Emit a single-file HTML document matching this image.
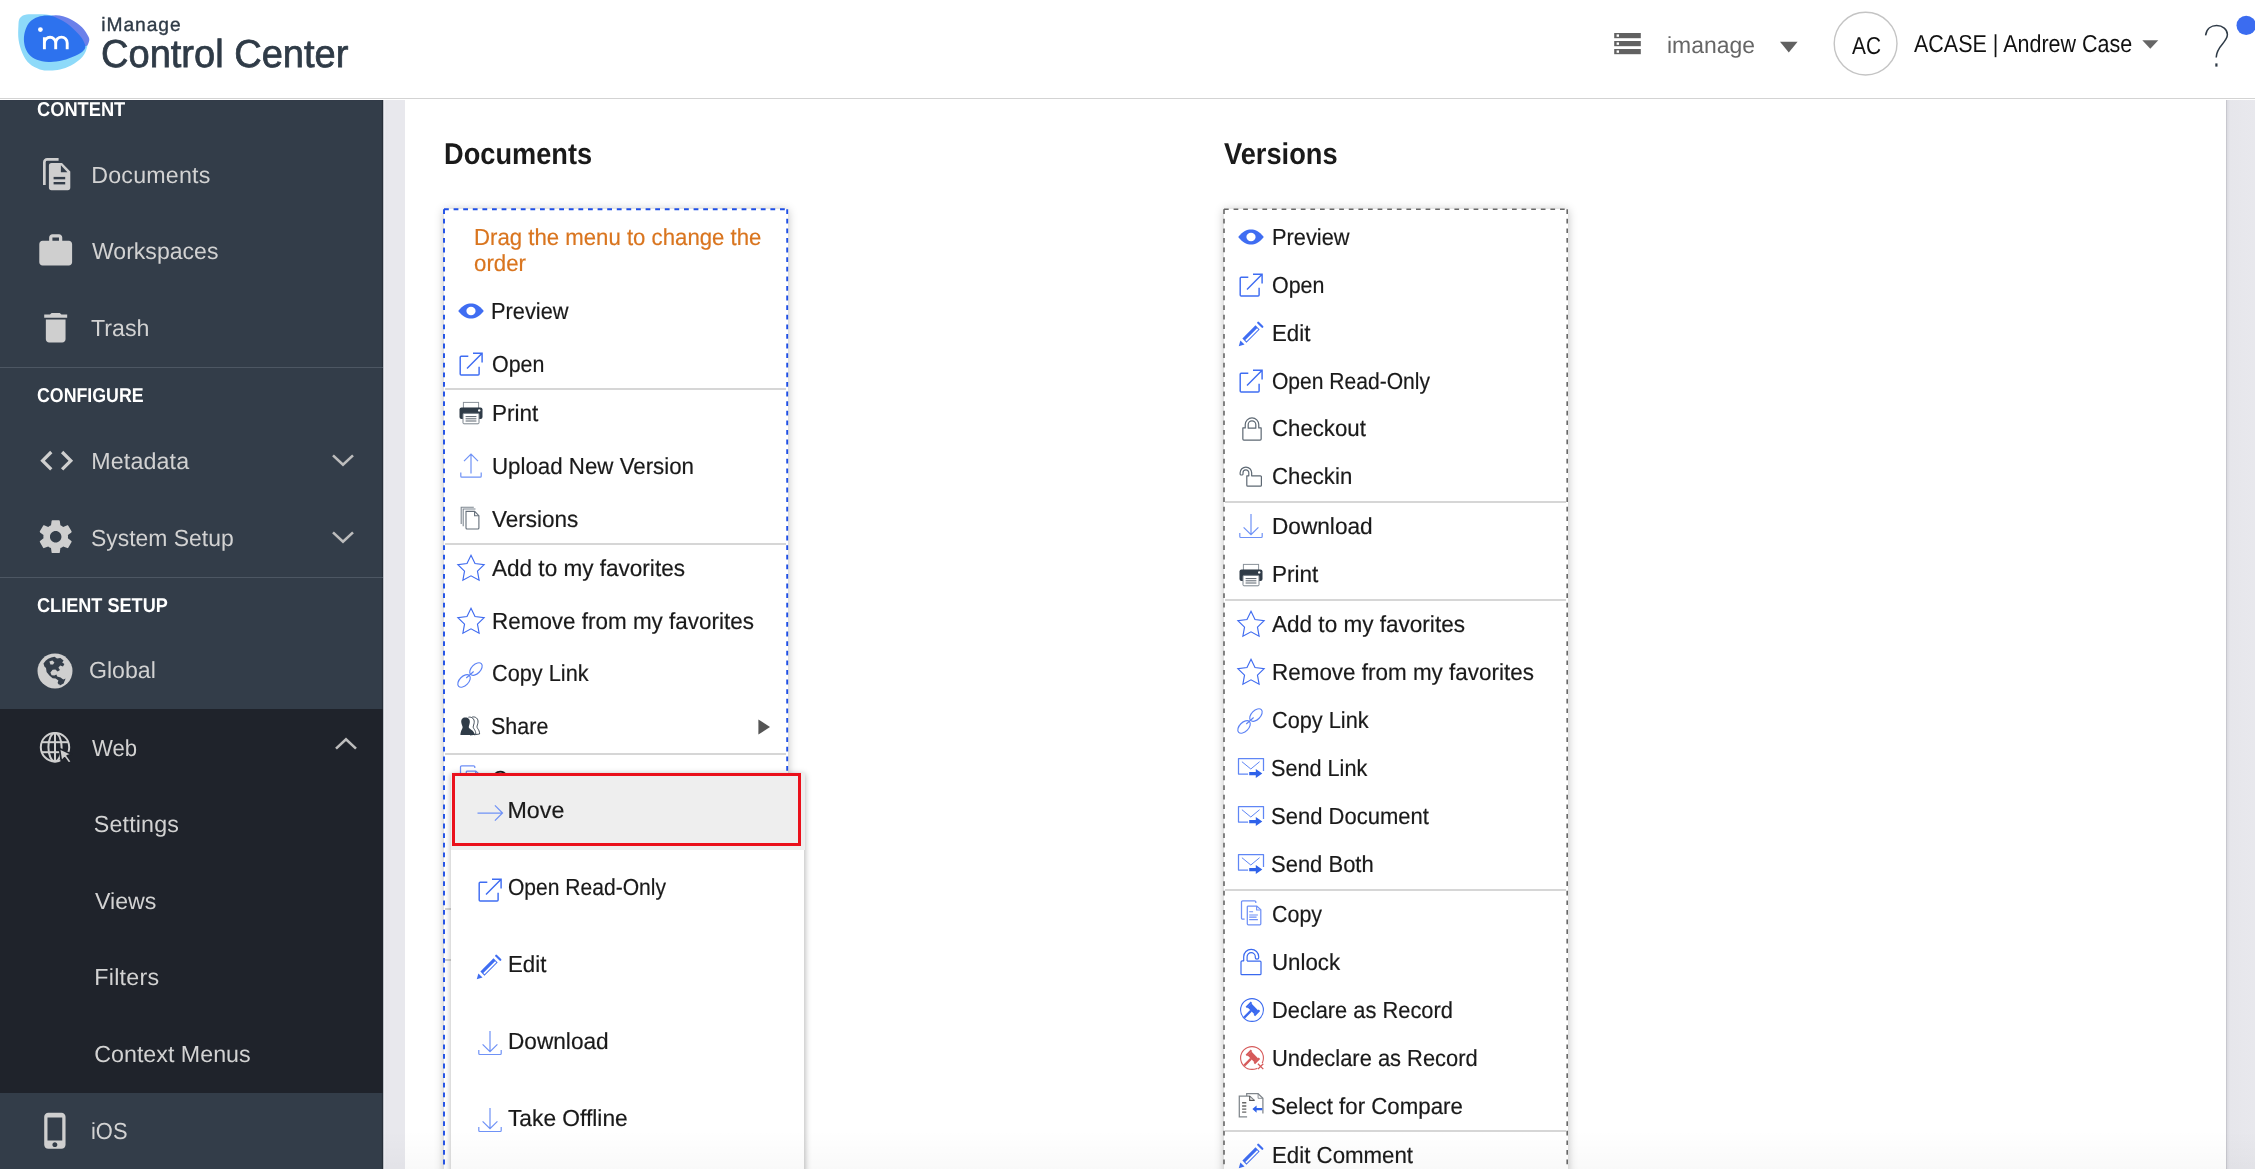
<!DOCTYPE html>
<html lang="en"><head><meta charset="utf-8"><title>iManage Control Center - Context Menus</title>
<style>
html,body{margin:0;padding:0}
body{width:2255px;height:1169px;overflow:hidden;position:relative;background:#fff;font-family:"Liberation Sans",sans-serif}
#root{position:absolute;left:0;top:0;width:2255px;height:1169px;overflow:hidden;will-change:transform}
.t{position:absolute;white-space:nowrap;display:block;transform-origin:0 0;text-rendering:geometricPrecision}
.abs{position:absolute}
svg{position:absolute;overflow:visible}
#header{position:absolute;left:0;top:0;width:2255px;height:98px;background:#fff;border-bottom:1.6px solid #d3d3d3;box-sizing:content-box}
#sidebar{position:absolute;left:0;top:99.5px;width:382.5px;box-shadow:inset -1.5px 0 1px -0.5px #262e38;height:1070px;background:#333d49;overflow:hidden}
#gap{position:absolute;left:382.5px;top:99.5px;width:22.5px;height:1070px;background:linear-gradient(90deg,#9a9fa8 0,#eeeef2 1.2px,#e6e6eb 3px,#e8e8ed 6px,#e8e8ed 100%)}
#rstrip{position:absolute;left:2226px;top:99.5px;width:29px;height:1070px;background:linear-gradient(90deg,#bdbdc4 0,#dcdce2 1.5px,#e6e6eb 4px,#e8e8ed 100%)}
#content{position:absolute;left:405px;top:99.5px;width:1821px;height:1070px;background:#fff}
.sbdiv{position:absolute;left:0;width:383px;height:1px;background:#4d5763}
#websec{position:absolute;left:0;top:709px;width:383px;height:384px;background:#1f232b}
.menu{position:absolute;background:#fff;box-shadow:0 1px 9px rgba(0,0,0,.26)}
.mdiv{position:absolute;height:2px;background:#d6d6d6}
#bottomfade{position:absolute;left:383px;top:1130px;width:1872px;height:39px;background:linear-gradient(180deg,rgba(0,0,0,0) 0,rgba(0,0,0,.024) 100%);z-index:20;pointer-events:none}
</style></head><body>
<div id="root">
<div id="content"></div>
<div id="gap"></div>
<div id="rstrip"></div>
<div id="sidebar"></div>
<div class="sbdiv" style="top:367px"></div>
<div class="sbdiv" style="top:577px"></div>
<div id="websec"></div>
<!-- documents menu -->
<div class="menu" style="left:443.5px;top:208.5px;width:344px;height:980px"></div>
<div class="mdiv" style="left:445px;top:388.0px;width:341px"></div>
<div class="mdiv" style="left:445px;top:543.0px;width:341px"></div>
<div class="mdiv" style="left:445px;top:752.6px;width:341px"></div>
<div class="mdiv" style="left:445px;top:908.0px;width:341px"></div>
<div class="mdiv" style="left:445px;top:959.0px;width:341px"></div>
<svg class="abs" style="left:0;top:0" width="2255" height="1169" viewBox="0 0 2255 1169"><line x1="444.0" y1="209.2" x2="787.2" y2="209.2" stroke="#1f4fe6" stroke-width="1.9" stroke-dasharray="4.8 4.8"/><line x1="444.0" y1="209.2" x2="444.0" y2="1189.2" stroke="#1f4fe6" stroke-width="1.9" stroke-dasharray="4.8 4.8"/><line x1="787.2" y1="209.2" x2="787.2" y2="1189.2" stroke="#1f4fe6" stroke-width="1.9" stroke-dasharray="4.8 4.8"/></svg>
<!-- versions menu -->
<div class="menu" style="left:1223.5px;top:208.5px;width:344px;height:980px"></div>
<div class="mdiv" style="left:1225px;top:501.0px;width:341px"></div>
<div class="mdiv" style="left:1225px;top:599.0px;width:341px"></div>
<div class="mdiv" style="left:1225px;top:888.6px;width:341px"></div>
<div class="mdiv" style="left:1225px;top:1130.0px;width:341px"></div>
<svg class="abs" style="left:0;top:0" width="2255" height="1169" viewBox="0 0 2255 1169"><line x1="1224.0" y1="209.2" x2="1567.2" y2="209.2" stroke="#686868" stroke-width="1.6" stroke-dasharray="4.7 4.9"/><line x1="1224.0" y1="209.2" x2="1224.0" y2="1189.2" stroke="#686868" stroke-width="1.6" stroke-dasharray="4.7 4.9"/><line x1="1567.2" y1="209.2" x2="1567.2" y2="1189.2" stroke="#686868" stroke-width="1.6" stroke-dasharray="4.7 4.9"/></svg>
<span class="t" style="left:37.25px;top:100.00px;font-size:20px;line-height:20px;color:#ffffff;transform:scaleX(0.9126);font-weight:700">CONTENT</span>
<span class="t" style="left:37.25px;top:386.00px;font-size:20px;line-height:20px;color:#ffffff;transform:scaleX(0.8887);font-weight:700">CONFIGURE</span>
<span class="t" style="left:37.25px;top:596.00px;font-size:20px;line-height:20px;color:#ffffff;transform:scaleX(0.9056);font-weight:700">CLIENT SETUP</span>
<span class="t" style="left:91.25px;top:164.00px;font-size:23.25px;line-height:23.25px;color:#d2d2d2;letter-spacing:0.181px">Documents</span>
<span class="t" style="left:91.50px;top:240.00px;font-size:23.25px;line-height:23.25px;color:#d2d2d2;transform:scaleX(0.9916)">Workspaces</span>
<span class="t" style="left:91.25px;top:317.00px;font-size:23.25px;line-height:23.25px;color:#d2d2d2;transform:scaleX(0.9972)">Trash</span>
<span class="t" style="left:91.25px;top:450.00px;font-size:23.25px;line-height:23.25px;color:#d2d2d2;letter-spacing:0.135px">Metadata</span>
<span class="t" style="left:91.00px;top:527.00px;font-size:23.25px;line-height:23.25px;color:#d2d2d2;transform:scaleX(0.9860)">System Setup</span>
<span class="t" style="left:88.50px;top:659.00px;font-size:23.25px;line-height:23.25px;color:#d2d2d2;transform:scaleX(0.9941)">Global</span>
<span class="t" style="left:91.75px;top:737.00px;font-size:23.25px;line-height:23.25px;color:#d2d2d2;transform:scaleX(0.9525)">Web</span>
<span class="t" style="left:93.75px;top:813.00px;font-size:23.25px;line-height:23.25px;color:#d2d2d2;letter-spacing:0.169px">Settings</span>
<span class="t" style="left:94.50px;top:890.00px;font-size:23.25px;line-height:23.25px;color:#d2d2d2;transform:scaleX(0.9966)">Views</span>
<span class="t" style="left:94.25px;top:966.00px;font-size:23.25px;line-height:23.25px;color:#d2d2d2;letter-spacing:0.275px">Filters</span>
<span class="t" style="left:94.25px;top:1043.00px;font-size:23.25px;line-height:23.25px;color:#d2d2d2">Context Menus</span>
<span class="t" style="left:91.25px;top:1120.00px;font-size:23.25px;line-height:23.25px;color:#d2d2d2;transform:scaleX(0.9413)">iOS</span>
<span class="t" style="left:443.50px;top:140.00px;font-size:30px;line-height:30px;color:#1a1a1a;transform:scaleX(0.9065);font-weight:700">Documents</span>
<span class="t" style="left:1223.50px;top:140.00px;font-size:30px;line-height:30px;color:#1a1a1a;transform:scaleX(0.9082);font-weight:700">Versions</span>
<span class="t" style="left:473.75px;top:226.00px;font-size:23.25px;line-height:23.25px;color:#d9751f;transform:scaleX(0.9544);-webkit-text-stroke:0.2px #d9751f">Drag the menu to change the</span>
<span class="t" style="left:474.25px;top:252.00px;font-size:23.25px;line-height:23.25px;color:#d9751f;transform:scaleX(0.9575);-webkit-text-stroke:0.2px #d9751f">order</span>
<span class="t" style="left:491.25px;top:300.00px;font-size:23.25px;line-height:23.25px;color:#1a1a1a;transform:scaleX(0.9374);-webkit-text-stroke:0.2px #1a1a1a">Preview</span>
<span class="t" style="left:492.00px;top:353.00px;font-size:23.25px;line-height:23.25px;color:#1a1a1a;transform:scaleX(0.9210);-webkit-text-stroke:0.2px #1a1a1a">Open</span>
<span class="t" style="left:491.50px;top:402.00px;font-size:23.25px;line-height:23.25px;color:#1a1a1a;transform:scaleX(0.9698);-webkit-text-stroke:0.2px #1a1a1a">Print</span>
<span class="t" style="left:491.75px;top:455.00px;font-size:23.25px;line-height:23.25px;color:#1a1a1a;transform:scaleX(0.9589);-webkit-text-stroke:0.2px #1a1a1a">Upload New Version</span>
<span class="t" style="left:491.75px;top:508.00px;font-size:23.25px;line-height:23.25px;color:#1a1a1a;transform:scaleX(0.9684);-webkit-text-stroke:0.2px #1a1a1a">Versions</span>
<span class="t" style="left:491.75px;top:557.00px;font-size:23.25px;line-height:23.25px;color:#1a1a1a;transform:scaleX(0.9696);-webkit-text-stroke:0.2px #1a1a1a">Add to my favorites</span>
<span class="t" style="left:491.75px;top:610.00px;font-size:23.25px;line-height:23.25px;color:#1a1a1a;transform:scaleX(0.9652);-webkit-text-stroke:0.2px #1a1a1a">Remove from my favorites</span>
<span class="t" style="left:491.75px;top:662.00px;font-size:23.25px;line-height:23.25px;color:#1a1a1a;transform:scaleX(0.9341);-webkit-text-stroke:0.2px #1a1a1a">Copy Link</span>
<span class="t" style="left:491.25px;top:715.00px;font-size:23.25px;line-height:23.25px;color:#1a1a1a;transform:scaleX(0.9241);-webkit-text-stroke:0.2px #1a1a1a">Share</span>
<span class="t" style="left:491.75px;top:768.00px;font-size:23.25px;line-height:23.25px;color:#1a1a1a;transform:scaleX(0.9221);-webkit-text-stroke:0.2px #1a1a1a">Copy</span>
<span class="t" style="left:1271.75px;top:226.00px;font-size:23.25px;line-height:23.25px;color:#1a1a1a;transform:scaleX(0.9374);-webkit-text-stroke:0.2px #1a1a1a">Preview</span>
<span class="t" style="left:1272.00px;top:274.00px;font-size:23.25px;line-height:23.25px;color:#1a1a1a;transform:scaleX(0.9210);-webkit-text-stroke:0.2px #1a1a1a">Open</span>
<span class="t" style="left:1271.75px;top:322.00px;font-size:23.25px;line-height:23.25px;color:#1a1a1a;transform:scaleX(0.9584);-webkit-text-stroke:0.2px #1a1a1a">Edit</span>
<span class="t" style="left:1272.00px;top:370.00px;font-size:23.25px;line-height:23.25px;color:#1a1a1a;transform:scaleX(0.9052);-webkit-text-stroke:0.2px #1a1a1a">Open Read-Only</span>
<span class="t" style="left:1271.75px;top:417.00px;font-size:23.25px;line-height:23.25px;color:#1a1a1a;transform:scaleX(0.9556);-webkit-text-stroke:0.2px #1a1a1a">Checkout</span>
<span class="t" style="left:1271.75px;top:465.00px;font-size:23.25px;line-height:23.25px;color:#1a1a1a;transform:scaleX(0.9555);-webkit-text-stroke:0.2px #1a1a1a">Checkin</span>
<span class="t" style="left:1271.50px;top:515.00px;font-size:23.25px;line-height:23.25px;color:#1a1a1a;transform:scaleX(0.9735);-webkit-text-stroke:0.2px #1a1a1a">Download</span>
<span class="t" style="left:1271.50px;top:563.00px;font-size:23.25px;line-height:23.25px;color:#1a1a1a;transform:scaleX(0.9698);-webkit-text-stroke:0.2px #1a1a1a">Print</span>
<span class="t" style="left:1271.75px;top:613.00px;font-size:23.25px;line-height:23.25px;color:#1a1a1a;transform:scaleX(0.9696);-webkit-text-stroke:0.2px #1a1a1a">Add to my favorites</span>
<span class="t" style="left:1271.75px;top:661.00px;font-size:23.25px;line-height:23.25px;color:#1a1a1a;transform:scaleX(0.9652);-webkit-text-stroke:0.2px #1a1a1a">Remove from my favorites</span>
<span class="t" style="left:1271.75px;top:709.00px;font-size:23.25px;line-height:23.25px;color:#1a1a1a;transform:scaleX(0.9341);-webkit-text-stroke:0.2px #1a1a1a">Copy Link</span>
<span class="t" style="left:1271.25px;top:757.00px;font-size:23.25px;line-height:23.25px;color:#1a1a1a;transform:scaleX(0.9306);-webkit-text-stroke:0.2px #1a1a1a">Send Link</span>
<span class="t" style="left:1271.25px;top:805.00px;font-size:23.25px;line-height:23.25px;color:#1a1a1a;transform:scaleX(0.9469);-webkit-text-stroke:0.2px #1a1a1a">Send Document</span>
<span class="t" style="left:1271.25px;top:853.00px;font-size:23.25px;line-height:23.25px;color:#1a1a1a;transform:scaleX(0.9457);-webkit-text-stroke:0.2px #1a1a1a">Send Both</span>
<span class="t" style="left:1271.75px;top:903.00px;font-size:23.25px;line-height:23.25px;color:#1a1a1a;transform:scaleX(0.9221);-webkit-text-stroke:0.2px #1a1a1a">Copy</span>
<span class="t" style="left:1271.75px;top:951.00px;font-size:23.25px;line-height:23.25px;color:#1a1a1a;transform:scaleX(0.9593);-webkit-text-stroke:0.2px #1a1a1a">Unlock</span>
<span class="t" style="left:1271.75px;top:999.00px;font-size:23.25px;line-height:23.25px;color:#1a1a1a;transform:scaleX(0.9394);-webkit-text-stroke:0.2px #1a1a1a">Declare as Record</span>
<span class="t" style="left:1271.75px;top:1047.00px;font-size:23.25px;line-height:23.25px;color:#1a1a1a;transform:scaleX(0.9418);-webkit-text-stroke:0.2px #1a1a1a">Undeclare as Record</span>
<span class="t" style="left:1271.25px;top:1095.00px;font-size:23.25px;line-height:23.25px;color:#1a1a1a;transform:scaleX(0.9580);-webkit-text-stroke:0.2px #1a1a1a">Select for Compare</span>
<span class="t" style="left:1271.75px;top:1144.00px;font-size:23.25px;line-height:23.25px;color:#1a1a1a;transform:scaleX(0.9576);-webkit-text-stroke:0.2px #1a1a1a">Edit Comment</span>
<svg style="left:0;top:0" width="383" height="1169" viewBox="0 0 383 1169">
<path d="M44.35 184.9 V162.2 a2.8 2.8 0 0 1 2.8 -2.8 H58.6" fill="none" stroke="#cfcfcf" stroke-width="2.7"/>
<path d="M51.5 163.1 H62.0 L70.3 171.4 V187.6 a2.6 2.6 0 0 1 -2.6 2.6 H51.5 a2.6 2.6 0 0 1 -2.6 -2.6 V165.7 a2.6 2.6 0 0 1 2.6 -2.6 Z" fill="#cfcfcf"/>
<path d="M60.9 165.3 V172.2 H67.4 Z" fill="#333d49"/>
<rect x="53.6" y="176.9" width="11.6" height="2.4" fill="#333d49"/>
<rect x="53.6" y="182.0" width="11.6" height="2.4" fill="#333d49"/>
</svg>
<svg style="left:36.30px;top:230.90px" width="39.4" height="39.4" viewBox="0 0 24 24"><path fill="#cfcfcf" d="M20 6h-4V4c0-1.11-.89-2-2-2h-4c-1.11 0-2 .89-2 2v2H4c-1.11 0-1.99.89-1.99 2L2 19c0 1.11.89 2 2 2h16c1.11 0 2-.89 2-2V8c0-1.11-.89-2-2-2zm-6 0h-4V4h4v2z"/></svg>
<svg style="left:36.30px;top:307.60px" width="39.4" height="39.4" viewBox="0 0 24 24"><path fill="#cfcfcf" d="M6 19c0 1.1.9 2 2 2h8c1.1 0 2-.9 2-2V7H6v12zM19 4h-3.5l-1-1h-5l-1 1H5v2h14V4z"/></svg>
<svg style="left:36.50px;top:440.50px" width="39.4" height="39.4" viewBox="0 0 24 24"><path fill="#cfcfcf" d="M9.4 16.6L4.8 12l4.6-4.6L8 6l-6 6 6 6 1.4-1.4zm5.2 0l4.6-4.6-4.6-4.6L16 6l6 6-6 6-1.4-1.4z"/></svg>
<svg style="left:36.30px;top:517.30px" width="39.4" height="39.4" viewBox="0 0 24 24"><path fill="#cfcfcf" d="M19.43 12.98c.04-.32.07-.64.07-.98s-.03-.66-.07-.98l2.11-1.65c.19-.15.24-.42.12-.64l-2-3.46c-.12-.22-.39-.3-.61-.22l-2.49 1c-.52-.4-1.08-.73-1.69-.98l-.38-2.65C14.46 2.18 14.25 2 14 2h-4c-.25 0-.46.18-.49.42l-.38 2.65c-.61.25-1.17.59-1.69.98l-2.49-1c-.23-.09-.49 0-.61.22l-2 3.46c-.13.22-.07.49.12.64l2.11 1.65c-.04.32-.07.65-.07.98s.03.66.07.98l-2.11 1.65c-.19.15-.24.42-.12.64l2 3.46c.12.22.39.3.61.22l2.49-1c.52.4 1.08.73 1.69.98l.38 2.65c.03.24.24.42.49.42h4c.25 0 .46-.18.49-.42l.38-2.65c.61-.25 1.17-.59 1.69-.98l2.49 1c.23.09.49 0 .61-.22l2-3.46c.12-.22.07-.49-.12-.64l-2.11-1.65zM12 15.5c-1.93 0-3.5-1.57-3.5-3.5s1.57-3.5 3.5-3.5 3.5 1.57 3.5 3.5-1.57 3.5-3.5 3.5z"/></svg>
<svg style="left:35.50px;top:1111.10px" width="39.4" height="39.4" viewBox="0 0 24 24"><path fill="#cfcfcf" d="M15.5 1h-8C6.12 1 5 2.12 5 3.5v17C5 21.88 6.12 23 7.5 23h8c1.38 0 2.5-1.12 2.5-2.5v-17C18 2.12 16.88 1 15.5 1zm-4 21c-.83 0-1.5-.67-1.5-1.5s.67-1.5 1.5-1.5 1.5.67 1.5 1.5-.67 1.5-1.5 1.5zm4.500-4H7V4h9v14z"/></svg>
<svg style="left:327.20px;top:444.20px" width="32" height="32" viewBox="-16.0 -16.0 32 32"><path d="M-10 -4.6 L0 4.8 L10 -4.6" fill="none" stroke="#bdbdbd" stroke-width="2.6"/></svg>
<svg style="left:327.20px;top:521.00px" width="32" height="32" viewBox="-16.0 -16.0 32 32"><path d="M-10 -4.6 L0 4.8 L10 -4.6" fill="none" stroke="#bdbdbd" stroke-width="2.6"/></svg>
<svg style="left:330.30px;top:727.60px" width="32" height="32" viewBox="-16.0 -16.0 32 32"><path d="M-10 4.6 L0 -4.8 L10 4.6" fill="none" stroke="#bdbdbd" stroke-width="2.6"/></svg>
<svg style="left:36.5px;top:653.2px" width="36" height="36" viewBox="-18 -18 36 36">
<circle cx="0" cy="0" r="17.5" fill="#cfcfcf"/>
<path fill="#333d49" d="M-11.5 -7.5 C-9 -11.5 -5 -13.8 -0.5 -14.2 L2 -12.6 L5.4 -13 L8.6 -10.6 L7.2 -8.6 L9.4 -7 L8 -4.6 L5.2 -5.4 L3.4 -3.2 L5 -1 L2.6 0.6 L0.4 -1.4 L-2.4 -1.2 L-4.6 1.4 L-3.4 4.2 L-0.6 4.6 L1.4 3.4 L2.2 5.6 L5.6 6.4 L8.8 9 L7.2 12 L4 13.8 L2.6 12 L3.4 9.4 L0.6 7.6 L-2.4 7.2 L-5.6 4.6 L-8.4 1 L-9 -3 L-10.6 -4.6 Z"/>
<path fill="#cfcfcf" d="M-5.6 -9.4 L-2.6 -10.6 L-0.6 -8.4 L-2 -6.4 L-4.6 -6.6 Z"/>
<path fill="#333d49" d="M4.4 10.6 L10.6 7.6 L8.6 12.4 L4.8 14.6 Z"/>
</svg>
<svg style="left:37px;top:729px" width="40" height="40" viewBox="-18 -18 40 40">
<g fill="none" stroke="#cfcfcf" stroke-width="2">
<circle cx="0" cy="0.2" r="14.2"/>
<ellipse cx="0" cy="0.2" rx="6.6" ry="14.2"/>
<line x1="0" y1="-14" x2="0" y2="14.4"/>
<line x1="-13.2" y1="-4.8" x2="13.2" y2="-4.8"/>
<line x1="-13.2" y1="5.2" x2="13.2" y2="5.2"/>
</g>
<path d="M4.4 1.4 L16.6 7.2 L12.2 8.8 L16.4 14.4 L13.8 16.4 L9.6 10.8 L6.4 14.4 Z" fill="#cfcfcf" stroke="#1f232b" stroke-width="1.7" stroke-linejoin="round"/>
</svg>
<svg style="left:454.60px;top:295.10px" width="32" height="32" viewBox="-16.0 -16.0 32 32"><path d="M-12.8 0 C-8 -6.2 -4 -7.5 0 -7.5 C4 -7.5 8 -6.2 12.8 0 C8 6.2 4 7.5 0 7.5 C-4 7.5 -8 6.2 -12.8 0Z" fill="#3f6df2"/><ellipse cx="0" cy="0" rx="4.6" ry="4.2" fill="#fff"/></svg>
<svg style="left:454.50px;top:347.50px" width="32" height="32" viewBox="-16.0 -16.0 32 32"><g fill="none" stroke="#3f6df2" stroke-width="1.45"><path d="M-2.7 -7.7 H-9.8 a1 1 0 0 0 -1 1 V10 a1 1 0 0 0 1 1 H7.1 a1 1 0 0 0 1 -1 V2.7"/><path d="M-4 4.4 L11.1 -10.7 M2.0 -10.7 H11.1 V-1.6"/></g></svg>
<svg style="left:454.50px;top:397.20px" width="32" height="32" viewBox="-16.0 -16.0 32 32"><rect x="-7.6" y="-10.6" width="15.2" height="6" fill="#fff" stroke="#8a929a" stroke-width="1"/>
<rect x="-11.5" y="-5.6" width="23" height="11.6" rx="2" fill="#2f3b47"/>
<circle cx="8.2" cy="-2.6" r="1.2" fill="#fff"/>
<rect x="-8" y="0.4" width="16" height="10.4" rx="1" fill="#fff" stroke="#7a838c" stroke-width="1"/>
<path d="M-5.4 3.6 H5.4 M-5.4 5.8 H5.4 M-5.4 8 H5.4" stroke="#59626c" stroke-width="1"/></svg>
<svg style="left:454.50px;top:449.80px" width="32" height="32" viewBox="-16.0 -16.0 32 32"><g fill="none" stroke="#6f92f6" stroke-width="1.2"><path d="M0 7.6 V-11.8 M-7 -4.9 L0 -12 L7 -4.9"/><path d="M-10.2 6.4 V10.2 a1 1 0 0 0 1 1 H9.2 a1 1 0 0 0 1 -1 V6.4"/></g></svg>
<svg style="left:454.20px;top:502.40px" width="32" height="32" viewBox="-16.0 -16.0 32 32"><g fill="none" stroke-width="1.1"><path d="M-8.8 5.9 V-10.8 H3.8" stroke="#7d8690"/><path d="M-6.8 8.3 V-9.0 H5.5" stroke="#7d8690"/><path d="M-4.0 -6.6 H4.6 L8.9 -2.3 V10 a1 1 0 0 1 -1 1 H-3.0 a1 1 0 0 1 -1 -1 Z" fill="#fff" stroke="#646e79"/><path d="M4.6 -6.6 V-2.3 H8.9" stroke="#646e79"/></g></svg>
<svg style="left:454.55px;top:553.20px" width="32" height="32" viewBox="-16.0 -16.0 32 32"><polygon points="0.00,-13.80 4.00,-5.50 13.12,-4.26 6.47,2.10 8.11,11.16 0.00,6.80 -8.11,11.16 -6.47,2.10 -13.12,-4.26 -4.00,-5.50" fill="none" stroke="#3f6bf0" stroke-width="1.15" stroke-linejoin="miter"/></svg>
<svg style="left:454.55px;top:605.90px" width="32" height="32" viewBox="-16.0 -16.0 32 32"><polygon points="0.00,-13.80 4.00,-5.50 13.12,-4.26 6.47,2.10 8.11,11.16 0.00,6.80 -8.11,11.16 -6.47,2.10 -13.12,-4.26 -4.00,-5.50" fill="none" stroke="#3f6bf0" stroke-width="1.15" stroke-linejoin="miter"/></svg>
<svg style="left:454.25px;top:658.65px" width="32" height="32" viewBox="-16.0 -16.0 32 32"><g fill="none" stroke="#5d83f5" stroke-width="1.15"><ellipse cx="0" cy="0" rx="7.6" ry="4.5" transform="translate(5.95,-5.95) rotate(-45)"/><ellipse cx="0" cy="0" rx="7.6" ry="4.5" transform="translate(-5.95,5.95) rotate(-45)"/><path d="M-3.75 3.05 L3.65 -3.45"/></g></svg>
<svg style="left:454.40px;top:710.00px" width="32" height="32" viewBox="-16.0 -16.0 32 32"><path d="M2.2 -9 C5.6 -9.6 8.4 -7.4 8 -3.8 C7.8 -1.6 7 -0.4 7 0.8 C7 2.6 9.6 3.6 9.6 8 L4 8.8" fill="#fff" stroke="#2f3b47" stroke-width="0.9"/>
<path d="M-1.6 -8.8 C1.8 -9.4 4.6 -7.2 4.2 -3.6 C4 -1.4 3.2 -0.2 3.2 1 C3.2 2.8 5.8 3.8 5.8 8.2 L0 9" fill="#fff" stroke="#2f3b47" stroke-width="0.9"/>
<path d="M-4.6 -8.4 C-1.6 -8.4 0.2 -6.4 -0.2 -3.4 C-0.5 -1.2 -1.2 0 -1.2 1.2 C-1.2 3 4.4 4 4.8 9 H-9.6 C-9.4 4.4 -7.4 3 -7.4 1.2 C-7.4 0 -8.4 -1.2 -8.7 -3.4 C-9.1 -6.4 -7.6 -8.4 -4.6 -8.4Z" fill="#2f3b47"/></svg>
<svg style="left:748.00px;top:710.50px" width="32" height="32" viewBox="-16.0 -16.0 32 32"><path d="M-5.6 -7.6 L6 0 L-5.6 7.6 Z" fill="#555"/></svg>
<svg style="left:454.20px;top:762.00px" width="32" height="32" viewBox="-16.0 -16.0 32 32"><g fill="none" stroke="#6f90f6" stroke-width="1.25" stroke-linejoin="round"><path d="M-6.4 6.2 H-8.3 a1.2 1.2 0 0 1 -1.2 -1.2 V-10.9 a1.2 1.2 0 0 1 1.2 -1.2 H3.6 a1.2 1.2 0 0 1 1.2 1.2 V-9.9"/>
<path d="M-2.7 -7 H5.6 L9.8 -3.4 V10.8 a1 1 0 0 1 -1 1 H-2.7 a1 1 0 0 1 -1 -1 V-6 a1 1 0 0 1 1 -1 Z"/><path d="M5.6 -7 V-3 H9.4" stroke-width="1.1"/>
<path d="M-1.8 -1.3 H2.1 M-1.8 2.0 H6.9 M-1.8 4.1 H5.6 M-1.8 6.6 H6.9" stroke-width="1.1"/></g></svg>
<svg style="left:1235.40px;top:221.40px" width="32" height="32" viewBox="-16.0 -16.0 32 32"><path d="M-12.8 0 C-8 -6.2 -4 -7.5 0 -7.5 C4 -7.5 8 -6.2 12.8 0 C8 6.2 4 7.5 0 7.5 C-4 7.5 -8 6.2 -12.8 0Z" fill="#3f6df2"/><ellipse cx="0" cy="0" rx="4.6" ry="4.2" fill="#fff"/></svg>
<svg style="left:1235.10px;top:269.00px" width="32" height="32" viewBox="-16.0 -16.0 32 32"><g fill="none" stroke="#3f6df2" stroke-width="1.45"><path d="M-2.7 -7.7 H-9.8 a1 1 0 0 0 -1 1 V10 a1 1 0 0 0 1 1 H7.1 a1 1 0 0 0 1 -1 V2.7"/><path d="M-4 4.4 L11.1 -10.7 M2.0 -10.7 H11.1 V-1.6"/></g></svg>
<svg style="left:1235.00px;top:317.80px" width="32" height="32" viewBox="-16.0 -16.0 32 32"><g transform="rotate(-45)">
<path d="M-17.3 0 L-12.1 -2.9 V2.9 Z" fill="#3f6df2"/>
<rect x="-9.3" y="-2.9" width="18.6" height="5.8" fill="#3f6df2"/>
<rect x="-8.3" y="0.3" width="16.6" height="1.7" fill="#fff"/>
<path d="M13.1 -2.9 V2.9" stroke="#3f6df2" stroke-width="2.2" stroke-linecap="round"/>
</g></svg>
<svg style="left:1235.10px;top:364.80px" width="32" height="32" viewBox="-16.0 -16.0 32 32"><g fill="none" stroke="#3f6df2" stroke-width="1.45"><path d="M-2.7 -7.7 H-9.8 a1 1 0 0 0 -1 1 V10 a1 1 0 0 0 1 1 H7.1 a1 1 0 0 0 1 -1 V2.7"/><path d="M-4 4.4 L11.1 -10.7 M2.0 -10.7 H11.1 V-1.6"/></g></svg>
<svg style="left:1236.05px;top:413.30px" width="32" height="32" viewBox="-16.0 -16.0 32 32"><g fill="none" stroke="#5d6873" stroke-width="1.2" stroke-linejoin="round"><path d="M-9.15 -1.1 H-6.75 V-4.4 a6.75 6.75 0 0 1 13.5 0 V-1.1 H9.15 V10.1 a1 1 0 0 1 -1 1 H-8.15 a1 1 0 0 1 -1 -1 Z"/><path d="M-3.8 -0.8 V-4.4 a3.8 3.8 0 0 1 7.6 0 V-0.8 Z"/></g></svg>
<svg style="left:1235.30px;top:461.40px" width="32" height="32" viewBox="-16.0 -16.0 32 32"><g fill="none" stroke="#5d6873" stroke-width="1.2" stroke-linejoin="round"><path d="M-8 -3.1 V-4.2 a2.9 2.9 0 0 1 5.8 0 V-1.2 H-4.2 V8.2 a1 1 0 0 0 1 1 H9.4 a1 1 0 0 0 1 -1 V-0.2 a1 1 0 0 0 -1 -1 H0.67 V-4.2 a5.77 5.77 0 0 0 -11.54 0 V-3.1 a1.43 1.1 0 0 0 2.87 0"/></g></svg>
<svg style="left:1235.00px;top:510.20px" width="32" height="32" viewBox="-16.0 -16.0 32 32"><g fill="none" stroke="#6f92f6" stroke-width="1.2"><path d="M0 -12.1 V8.5 M-7.4 1.3 L0 8.7 L7.4 1.3"/><path d="M-11.2 6.9 V10.5 a1 1 0 0 0 1 1 H10.2 a1 1 0 0 0 1 -1 V6.9"/></g></svg>
<svg style="left:1235.00px;top:558.60px" width="32" height="32" viewBox="-16.0 -16.0 32 32"><rect x="-7.6" y="-10.6" width="15.2" height="6" fill="#fff" stroke="#8a929a" stroke-width="1"/>
<rect x="-11.5" y="-5.6" width="23" height="11.6" rx="2" fill="#2f3b47"/>
<circle cx="8.2" cy="-2.6" r="1.2" fill="#fff"/>
<rect x="-8" y="0.4" width="16" height="10.4" rx="1" fill="#fff" stroke="#7a838c" stroke-width="1"/>
<path d="M-5.4 3.6 H5.4 M-5.4 5.8 H5.4 M-5.4 8 H5.4" stroke="#59626c" stroke-width="1"/></svg>
<svg style="left:1234.55px;top:608.80px" width="32" height="32" viewBox="-16.0 -16.0 32 32"><polygon points="0.00,-13.80 4.00,-5.50 13.12,-4.26 6.47,2.10 8.11,11.16 0.00,6.80 -8.11,11.16 -6.47,2.10 -13.12,-4.26 -4.00,-5.50" fill="none" stroke="#3f6bf0" stroke-width="1.15" stroke-linejoin="miter"/></svg>
<svg style="left:1234.55px;top:656.80px" width="32" height="32" viewBox="-16.0 -16.0 32 32"><polygon points="0.00,-13.80 4.00,-5.50 13.12,-4.26 6.47,2.10 8.11,11.16 0.00,6.80 -8.11,11.16 -6.47,2.10 -13.12,-4.26 -4.00,-5.50" fill="none" stroke="#3f6bf0" stroke-width="1.15" stroke-linejoin="miter"/></svg>
<svg style="left:1234.25px;top:704.85px" width="32" height="32" viewBox="-16.0 -16.0 32 32"><g fill="none" stroke="#5d83f5" stroke-width="1.15"><ellipse cx="0" cy="0" rx="7.6" ry="4.5" transform="translate(5.95,-5.95) rotate(-45)"/><ellipse cx="0" cy="0" rx="7.6" ry="4.5" transform="translate(-5.95,5.95) rotate(-45)"/><path d="M-3.75 3.05 L3.65 -3.45"/></g></svg>
<svg style="left:1235.00px;top:751.60px" width="32" height="32" viewBox="-16.0 -16.0 32 32"><g fill="none" stroke="#5f86f5" stroke-width="1.25" stroke-linejoin="round"><path d="M-2.9 6 H-12.5 V-9.4 H12.5 V2.9"/><path d="M-9.1 -6.3 L-0.2 1.0 L8.6 -6.3" stroke-width="1.0"/></g>
<path d="M-1.8 4.1 H4.8 V1.0 L11.3 5.6 L4.8 10.0 V7.3 H-1.8 Z" fill="#2f62ea"/></svg>
<svg style="left:1235.00px;top:799.60px" width="32" height="32" viewBox="-16.0 -16.0 32 32"><g fill="none" stroke="#5f86f5" stroke-width="1.25" stroke-linejoin="round"><path d="M-2.9 6 H-12.5 V-9.4 H12.5 V2.9"/><path d="M-9.1 -6.3 L-0.2 1.0 L8.6 -6.3" stroke-width="1.0"/></g>
<path d="M-1.8 4.1 H4.8 V1.0 L11.3 5.6 L4.8 10.0 V7.3 H-1.8 Z" fill="#2f62ea"/></svg>
<svg style="left:1235.00px;top:847.80px" width="32" height="32" viewBox="-16.0 -16.0 32 32"><g fill="none" stroke="#5f86f5" stroke-width="1.25" stroke-linejoin="round"><path d="M-2.9 6 H-12.5 V-9.4 H12.5 V2.9"/><path d="M-9.1 -6.3 L-0.2 1.0 L8.6 -6.3" stroke-width="1.0"/></g>
<path d="M-1.8 4.1 H4.8 V1.0 L11.3 5.6 L4.8 10.0 V7.3 H-1.8 Z" fill="#2f62ea"/></svg>
<svg style="left:1235.00px;top:897.40px" width="32" height="32" viewBox="-16.0 -16.0 32 32"><g fill="none" stroke="#6f90f6" stroke-width="1.25" stroke-linejoin="round"><path d="M-6.4 6.2 H-8.3 a1.2 1.2 0 0 1 -1.2 -1.2 V-10.9 a1.2 1.2 0 0 1 1.2 -1.2 H3.6 a1.2 1.2 0 0 1 1.2 1.2 V-9.9"/>
<path d="M-2.7 -7 H5.6 L9.8 -3.4 V10.8 a1 1 0 0 1 -1 1 H-2.7 a1 1 0 0 1 -1 -1 V-6 a1 1 0 0 1 1 -1 Z"/><path d="M5.6 -7 V-3 H9.4" stroke-width="1.1"/>
<path d="M-1.8 -1.3 H2.1 M-1.8 2.0 H6.9 M-1.8 4.1 H5.6 M-1.8 6.6 H6.9" stroke-width="1.1"/></g></svg>
<svg style="left:1234.80px;top:946.00px" width="32" height="32" viewBox="-16.0 -16.0 32 32"><g fill="none" stroke="#3a69ef" stroke-width="1.2" stroke-linejoin="round"><path d="M-3.9 -0.9 H9 a1 1 0 0 1 1 1 V11.7 a1 1 0 0 1 -1 1 H-9 a1 1 0 0 1 -1 -1 V0 a1.2 1.2 0 0 1 1.2 -1.2 H-7.3 V-5.2 a7.5 7.5 0 0 1 15 0 V-4.2 a1.7 1.3 0 0 1 -3.4 0 V-5.2 a4.1 4.1 0 0 0 -8.2 0 V-0.9"/></g></svg>
<svg style="left:1235.55px;top:993.90px" width="32" height="32" viewBox="-16.0 -16.0 32 32"><circle cx="0" cy="0" r="11.4" fill="none" stroke="#3a69ef" stroke-width="1.1"/>
<g transform="translate(0.9,-1.1) rotate(45)" fill="#3a69ef"><rect x="-4.8" y="-2.7" width="9.6" height="5.4"/><rect x="-6.7" y="-3.6" width="2.1" height="7.2"/><rect x="4.6" y="-3.6" width="2.1" height="7.2"/><rect x="-1.15" y="2.5" width="2.3" height="9.8"/></g></svg>
<svg style="left:1235.55px;top:1042.00px" width="32" height="32" viewBox="-16.0 -16.0 32 32"><circle cx="0" cy="0" r="11.4" fill="none" stroke="#d65a5a" stroke-width="1.1"/>
<g transform="translate(0.9,-1.1) rotate(45)" fill="#d65a5a"><rect x="-4.8" y="-2.7" width="9.6" height="5.4"/><rect x="-6.7" y="-3.6" width="2.1" height="7.2"/><rect x="4.6" y="-3.6" width="2.1" height="7.2"/><rect x="-1.15" y="2.5" width="2.3" height="9.8"/></g><circle cx="8.6" cy="8.4" r="3.6" fill="#fff"/><path d="M5.9 5.7 L11.3 11.1 M11.3 5.7 L5.9 11.1" stroke="#d65a5a" stroke-width="1.3"/></svg>
<svg style="left:1234.70px;top:1089.00px" width="32" height="32" viewBox="-16.0 -16.0 32 32"><g fill="none" stroke="#80868c" stroke-width="1.25"><path d="M-4.3 -8.9 V-11.3 H7.1 L11.9 -6.7 V8.5"/><path d="M7.1 -11.3 V-6.7 H11.9" stroke-width="0.9"/>
<path d="M-3.9 11.9 H-11.7 V-8.9 H-1.3 L3.7 -4.4"/><path d="M-1.3 -8.9 V-4.6 H3.4" stroke="#555" stroke-width="1.1"/></g>
<path d="M-8.9 -2.3 H-4.7 M-8.9 1.0 H-4.7 M-8.9 4.1 H-4.7 M-8.9 7.1 H-4.7" stroke="#666" stroke-width="1.4"/>
<path d="M1.4 4.1 L5.6 0.5 V3.0 H11.3 V5.2 H5.6 V7.7 Z" fill="#2f62ea"/></svg>
<svg style="left:1235.20px;top:1139.90px" width="32" height="32" viewBox="-16.0 -16.0 32 32"><g transform="rotate(-45)">
<path d="M-17.3 0 L-12.1 -2.9 V2.9 Z" fill="#3f6df2"/>
<rect x="-9.3" y="-2.9" width="18.6" height="5.8" fill="#3f6df2"/>
<rect x="-8.3" y="0.3" width="16.6" height="1.7" fill="#fff"/>
<path d="M13.1 -2.9 V2.9" stroke="#3f6df2" stroke-width="2.2" stroke-linecap="round"/>
</g></svg>
<!-- floating dragged list -->
<div class="abs" style="left:451px;top:773px;width:354px;height:420px;background:#fff;box-shadow:0 1px 6px rgba(0,0,0,.3);border-right:1px solid #d6d6d6;box-sizing:border-box"></div>
<div class="abs" style="left:451px;top:773px;width:354px;height:76.7px;background:#eeeeee"></div>
<div class="abs" style="left:452px;top:773px;width:349px;height:73px;border:3px solid #ea101b;box-sizing:border-box"></div>
<span class="t" style="left:507.50px;top:799.00px;font-size:23.25px;line-height:23.25px;color:#1a1a1a;-webkit-text-stroke:0.2px #1a1a1a">Move</span>
<span class="t" style="left:508.00px;top:876.00px;font-size:23.25px;line-height:23.25px;color:#1a1a1a;transform:scaleX(0.9052);-webkit-text-stroke:0.2px #1a1a1a">Open Read-Only</span>
<span class="t" style="left:507.75px;top:953.00px;font-size:23.25px;line-height:23.25px;color:#1a1a1a;transform:scaleX(0.9584);-webkit-text-stroke:0.2px #1a1a1a">Edit</span>
<span class="t" style="left:507.50px;top:1030.00px;font-size:23.25px;line-height:23.25px;color:#1a1a1a;transform:scaleX(0.9735);-webkit-text-stroke:0.2px #1a1a1a">Download</span>
<span class="t" style="left:507.75px;top:1107.00px;font-size:23.25px;line-height:23.25px;color:#1a1a1a;transform:scaleX(0.9784);-webkit-text-stroke:0.2px #1a1a1a">Take Offline</span>
<svg style="left:473.60px;top:797.30px" width="32" height="32" viewBox="-16.0 -16.0 32 32"><g fill="none" stroke="#6f92f6" stroke-width="1.25"><path d="M-12.5 0 H12.3 M4.9 -7.6 L12.5 0 L4.9 7.6"/></g></svg>
<svg style="left:473.70px;top:873.70px" width="32" height="32" viewBox="-16.0 -16.0 32 32"><g fill="none" stroke="#3f6df2" stroke-width="1.45"><path d="M-2.7 -7.7 H-9.8 a1 1 0 0 0 -1 1 V10 a1 1 0 0 0 1 1 H7.1 a1 1 0 0 0 1 -1 V2.7"/><path d="M-4 4.4 L11.1 -10.7 M2.0 -10.7 H11.1 V-1.6"/></g></svg>
<svg style="left:473.30px;top:950.90px" width="32" height="32" viewBox="-16.0 -16.0 32 32"><g transform="rotate(-45)">
<path d="M-17.3 0 L-12.1 -2.9 V2.9 Z" fill="#3f6df2"/>
<rect x="-9.3" y="-2.9" width="18.6" height="5.8" fill="#3f6df2"/>
<rect x="-8.3" y="0.3" width="16.6" height="1.7" fill="#fff"/>
<path d="M13.1 -2.9 V2.9" stroke="#3f6df2" stroke-width="2.2" stroke-linecap="round"/>
</g></svg>
<svg style="left:473.60px;top:1027.00px" width="32" height="32" viewBox="-16.0 -16.0 32 32"><g fill="none" stroke="#6f92f6" stroke-width="1.2"><path d="M0 -12.1 V8.5 M-7.4 1.3 L0 8.7 L7.4 1.3"/><path d="M-11.2 6.9 V10.5 a1 1 0 0 0 1 1 H10.2 a1 1 0 0 0 1 -1 V6.9"/></g></svg>
<svg style="left:473.60px;top:1104.00px" width="32" height="32" viewBox="-16.0 -16.0 32 32"><g fill="none" stroke="#6f92f6" stroke-width="1.2"><path d="M0 -12.1 V8.5 M-7.4 1.3 L0 8.7 L7.4 1.3"/><path d="M-11.2 6.9 V10.5 a1 1 0 0 0 1 1 H10.2 a1 1 0 0 0 1 -1 V6.9"/></g></svg>
<div id="header"></div>
<svg style="left:14px;top:8px" width="82" height="70" viewBox="14 8 82 70">
<path d="M18.4 26.0 C18.6 22.4 18.6 20.5 19.6 18.6 C20.6 16.8 22.1 15.6 24.5 14.9 C26.9 14.2 30.4 14.2 34.0 14.2 C37.6 14.1 41.7 14.1 46.0 14.6 C50.3 15.1 55.2 15.6 60.0 17.4 C64.8 19.2 70.6 22.3 75.0 25.5 C79.4 28.7 84.4 33.0 86.4 36.5 C88.4 40.0 87.9 43.1 87.2 46.5 C86.5 49.9 85.2 53.6 82.5 56.8 C79.8 60.0 74.8 63.5 71.0 65.6 C67.2 67.7 63.5 68.6 60.0 69.4 C56.5 70.2 53.4 70.5 50.0 70.5 C46.6 70.5 43.4 70.6 39.9 69.4 C36.4 68.2 32.2 66.3 29.3 63.6 C26.4 60.9 24.2 57.1 22.4 53.2 C20.6 49.3 19.3 44.5 18.6 40.0 C17.9 35.5 18.2 29.6 18.4 26.0Z" fill="#8edaf9"/>
<path d="M47.0 18.0 C46.5 15.9 51.3 15.7 54.0 15.4 C56.7 15.1 60.0 15.4 63.0 16.2 C66.0 17.0 68.8 18.2 72.0 20.0 C75.2 21.8 79.3 24.5 82.0 27.2 C84.7 29.9 87.2 34.0 88.4 36.4 C89.6 38.8 89.4 39.8 89.0 41.4 C88.6 43.0 87.7 45.6 86.2 46.0 C84.7 46.4 83.0 45.3 80.0 44.0 C77.0 42.7 71.8 40.7 68.0 38.0 C64.2 35.3 60.5 31.3 57.0 28.0 C53.5 24.7 47.5 20.1 47.0 18.0Z" fill="#6b80ea"/>
<path d="M23.9 39.9 C23.8 36.6 24.4 33.0 25.4 30.0 C26.4 27.0 27.9 24.0 30.0 21.8 C32.1 19.6 35.0 18.0 38.0 17.0 C41.0 16.0 44.7 15.4 48.0 15.6 C51.3 15.8 54.5 16.8 58.0 18.4 C61.5 20.0 65.4 22.1 69.0 25.0 C72.6 27.9 77.2 32.3 79.8 35.5 C82.4 38.7 84.0 41.7 84.8 44.0 C85.6 46.3 85.7 47.4 84.6 49.2 C83.5 51.0 81.1 52.9 78.0 54.6 C74.9 56.3 70.1 58.2 66.0 59.4 C61.9 60.6 57.2 61.4 53.2 61.7 C49.2 62.0 45.5 62.0 42.0 61.3 C38.5 60.6 35.1 59.5 32.5 57.6 C29.9 55.7 27.6 53.0 26.2 50.0 C24.8 47.0 24.0 43.2 23.9 39.9Z" fill="#2d72ee"/>
<circle cx="40.4" cy="29.6" r="2.4" fill="#fff"/>
<path d="M44.4 49.2 V37.2 M44.4 42.9 a5.65 5.65 0 0 1 11.3 0 V49.2 M55.7 42.9 a5.75 5.75 0 0 1 11.5 0 V49.2" fill="none" stroke="#fff" stroke-width="2.9"/>
</svg>
<svg style="left:1614px;top:32px" width="28" height="24" viewBox="1614 32 28 24">
<g fill="#616161"><rect x="1614.2" y="33" width="26.6" height="5.2"/><rect x="1614.2" y="41" width="26.6" height="5.2"/><rect x="1614.2" y="49" width="26.6" height="5.2"/></g>
<g fill="#fff"><rect x="1616.6" y="34.4" width="2.4" height="2.4"/><rect x="1616.6" y="42.4" width="2.4" height="2.4"/><rect x="1616.6" y="50.4" width="2.4" height="2.4"/></g>
</svg>
<svg style="left:1779px;top:40px" width="20" height="14" viewBox="1779 40 20 14"><path d="M1780 41.7 H1797.6 L1788.8 52.5 Z" fill="#616161"/></svg>
<svg style="left:1832px;top:10px" width="68" height="68" viewBox="1832 10 68 68"><circle cx="1865.6" cy="43.6" r="31.4" fill="#fff" stroke="#c4c4c4" stroke-width="1.4"/></svg>
<svg style="left:2141px;top:39px" width="20" height="12" viewBox="2141 39 20 12"><path d="M2142.3 40.2 H2158.3 L2150.3 48.8 Z" fill="#666"/></svg>
<svg style="left:2200px;top:20px" width="34" height="52" viewBox="2200 20 34 52">
<path d="M2205.6 35.4 C2206.6 28.6 2211.4 25.6 2216.6 25.6 C2222.6 25.6 2227.4 29.2 2227.4 34.6 C2227.4 42.6 2216.4 45.6 2216.2 57.6" fill="none" stroke="#2f3b47" stroke-width="1.5"/>
<rect x="2215.3" y="63.4" width="2.2" height="3.2" fill="#2f3b47"/>
</svg>
<svg style="left:2234px;top:14px" width="21" height="24" viewBox="2234 14 21 24"><circle cx="2246.2" cy="25.4" r="9.7" fill="#3b6cf0"/></svg>
<span class="t" style="left:101.25px;top:16.00px;font-size:19.25px;line-height:19.25px;color:#2f3b47;letter-spacing:0.938px;-webkit-text-stroke:0.35px #2f3b47">iManage</span>
<span class="t" style="left:101.25px;top:35.00px;font-size:39px;line-height:39px;color:#2f3b47;transform:scaleX(0.9756);-webkit-text-stroke:0.75px #2f3b47">Control Center</span>
<span class="t" style="left:1667.25px;top:34.00px;font-size:23.25px;line-height:23.25px;color:#666666;transform:scaleX(0.9867)">imanage</span>
<span class="t" style="left:1851.75px;top:35.00px;font-size:24.5px;line-height:24.5px;color:#111111;transform:scaleX(0.8509)">AC</span>
<span class="t" style="left:1914.00px;top:33.00px;font-size:24.5px;line-height:24.5px;color:#111111;transform:scaleX(0.8768)">ACASE | Andrew Case</span>
<div id="bottomfade"></div>
</div>
</body></html>
